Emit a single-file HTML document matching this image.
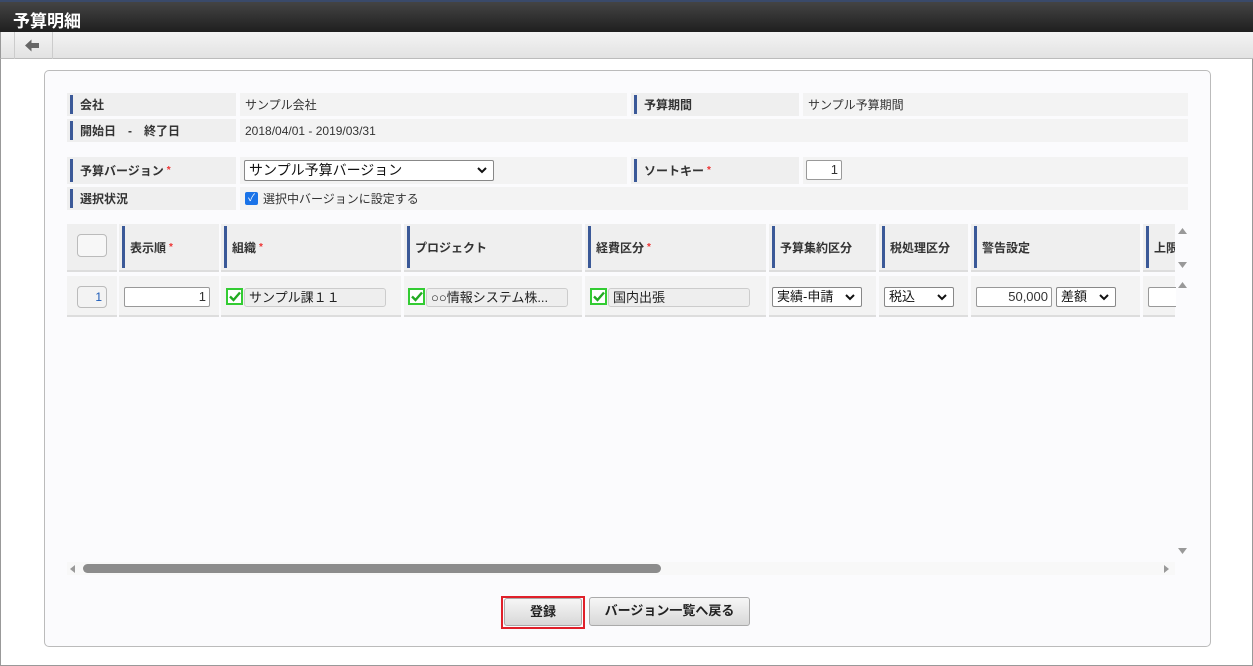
<!DOCTYPE html>
<html><head><meta charset="utf-8"><style>
*{box-sizing:border-box;margin:0;padding:0}
body{width:1253px;height:666px;background:#fff;font-family:"Liberation Sans","Noto Sans CJK JP",sans-serif;font-size:12px;color:#333;position:relative;overflow:hidden}
.a{position:absolute}
.lab{background:#efefef;font-weight:bold;padding-left:13px;display:flex;align-items:center}
.lab:before{content:"";position:absolute;left:3px;top:2px;bottom:2px;width:3px;background:#3b5998}
.val{background:#f3f3f3;padding-left:5px;display:flex;align-items:center}
.req{color:#e33;font-size:10px;margin-left:3px}
.th{background:#efefef;font-weight:bold;display:flex;align-items:center;padding-left:11px;border-bottom:2px solid #ddd}
.th.b:before{content:"";position:absolute;left:3px;top:2px;bottom:2px;width:3px;background:#3b5998}
.td{background:#f3f3f3;border-bottom:2px solid #ddd}
.inp{position:absolute;background:#fff;border:1px solid #999;border-radius:2px;font-size:13px;text-align:right;padding-right:3px;line-height:18px;height:20px}
.sel{position:absolute;background:#fff;border:1px solid #888;border-radius:2px;font-size:13px;padding-left:4px;line-height:18px;height:20px;color:#111}
.sel svg{position:absolute;right:6px;top:6px}
.ro{position:absolute;background:#eee;border:1px solid #ccc;border-radius:3px;font-size:13px;padding-left:4px;line-height:17px;height:19px;color:#222}
.ck{position:absolute;width:17px;height:17px;border:2px solid #3c3;background:#fff}
.ck svg{position:absolute;left:1px;top:1px}
.btn{position:absolute;background:linear-gradient(#f6f6f6,#d8d8d8);border:1px solid #aaa;border-radius:3px;font-size:13px;font-weight:bold;text-align:center;line-height:26px;color:#222}
</style></head><body>
<div class="a" style="left:0;top:0;width:1253px;height:666px;border:1px solid #999;border-top:none"></div>
<div class="a" style="left:0;top:0;width:1253px;height:32px;background:linear-gradient(#444,#1f1f1f);border-top:2px solid #3a4a6a;color:#fff;font-size:17px;font-weight:bold;padding:5px 0 0 13px">予算明細</div>
<div class="a" style="left:0;top:32px;width:1253px;height:27px;background:linear-gradient(#f4f4f4,#e2e2e2);border-bottom:1px solid #bbb;border-left:1px solid #999"></div>
<div class="a" style="left:14px;top:32px;width:39px;height:27px;border-left:1px solid #ccc;border-right:1px solid #ccc"></div>
<svg class="a" style="left:25px;top:39px" width="15" height="13" viewBox="0 0 15 13"><path d="M0 6.5L6.5 0.5V4H14V9H6.5V12.5Z" fill="#666"/></svg>
<div class="a" style="left:44px;top:70px;width:1167px;height:577px;border:1px solid #bbb;border-radius:5px;background:#fbfbfd"></div>

<div class="a lab" style="left:67px;top:93px;width:169px;height:23px">会社</div>
<div class="a val" style="left:240px;top:93px;width:387px;height:23px">サンプル会社</div>
<div class="a lab" style="left:631px;top:93px;width:168px;height:23px">予算期間</div>
<div class="a val" style="left:803px;top:93px;width:385px;height:23px">サンプル予算期間</div>
<div class="a lab" style="left:67px;top:119px;width:169px;height:23px">開始日　-　終了日</div>
<div class="a val" style="left:240px;top:119px;width:948px;height:23px">2018/04/01 - 2019/03/31</div>

<div class="a lab" style="left:67px;top:157px;width:169px;height:27px">予算バージョン<span class="req">*</span></div>
<div class="a val" style="left:240px;top:157px;width:387px;height:27px"></div>
<div class="sel" style="left:244px;top:160px;width:250px;height:21px;font-size:14px">サンプル予算バージョン<svg width="10" height="7"><path d="M1 1L5 5L9 1" stroke="#111" stroke-width="2" fill="none"/></svg></div>
<div class="a lab" style="left:631px;top:157px;width:168px;height:27px">ソートキー<span class="req">*</span></div>
<div class="a val" style="left:803px;top:157px;width:385px;height:27px"></div>
<div class="inp" style="left:806px;top:160px;width:36px">1</div>
<div class="a lab" style="left:67px;top:187px;width:169px;height:23px">選択状況</div>
<div class="a val" style="left:240px;top:187px;width:948px;height:23px"><span style="display:inline-block;width:13px;height:13px;background:#1a73e8;border-radius:2px;color:#fff;font-size:10px;text-align:center;line-height:13px;margin-right:5px">✓</span>選択中バージョンに設定する</div>

<div class="a th" style="left:67px;top:224px;width:50px;height:48px;padding:0"></div>
<div class="a" style="left:77px;top:234px;width:30px;height:23px;border:1px solid #bbb;border-radius:4px;background:#f7f7f7"></div>
<div class="a th b" style="left:119px;top:224px;width:100px;height:48px">表示順<span class="req">*</span></div>
<div class="a th b" style="left:221px;top:224px;width:180px;height:48px">組織<span class="req">*</span></div>
<div class="a th b" style="left:404px;top:224px;width:178px;height:48px">プロジェクト</div>
<div class="a th b" style="left:585px;top:224px;width:181px;height:48px">経費区分<span class="req">*</span></div>
<div class="a th b" style="left:769px;top:224px;width:107px;height:48px">予算集約区分</div>
<div class="a th b" style="left:879px;top:224px;width:89px;height:48px">税処理区分</div>
<div class="a th b" style="left:971px;top:224px;width:169px;height:48px">警告設定</div>
<div class="a th b" style="left:1143px;top:224px;width:32px;height:48px;overflow:hidden;white-space:nowrap">上限</div>

<div class="a td" style="left:67px;top:276px;width:50px;height:41px"></div>
<div class="a td" style="left:119px;top:276px;width:100px;height:41px"></div>
<div class="a td" style="left:221px;top:276px;width:180px;height:41px"></div>
<div class="a td" style="left:404px;top:276px;width:178px;height:41px"></div>
<div class="a td" style="left:585px;top:276px;width:181px;height:41px"></div>
<div class="a td" style="left:769px;top:276px;width:107px;height:41px"></div>
<div class="a td" style="left:879px;top:276px;width:89px;height:41px"></div>
<div class="a td" style="left:971px;top:276px;width:169px;height:41px"></div>
<div class="a td" style="left:1143px;top:276px;width:32px;height:41px"></div>
<div class="a" style="left:77px;top:286px;width:30px;height:22px;border:1px solid #bbb;border-radius:4px;text-align:right;padding-right:4px;line-height:20px;color:#1a5ab8">1</div>
<div class="inp" style="left:124px;top:287px;width:86px">1</div>
<div class="ck" style="left:226px;top:288px"><svg width="12" height="11"><path d="M1 5.5L4.5 9L11 1.5" stroke="#2a2" stroke-width="2.4" fill="none"/></svg></div>
<div class="ro" style="left:244px;top:288px;width:142px">サンプル課１１</div>
<div class="ck" style="left:408px;top:288px"><svg width="12" height="11"><path d="M1 5.5L4.5 9L11 1.5" stroke="#2a2" stroke-width="2.4" fill="none"/></svg></div>
<div class="ro" style="left:426px;top:288px;width:142px">○○情報システム株...</div>
<div class="ck" style="left:590px;top:288px"><svg width="12" height="11"><path d="M1 5.5L4.5 9L11 1.5" stroke="#2a2" stroke-width="2.4" fill="none"/></svg></div>
<div class="ro" style="left:608px;top:288px;width:142px">国内出張</div>
<div class="sel" style="left:772px;top:287px;width:90px">実績-申請<svg width="10" height="7"><path d="M1 1L5 5L9 1" stroke="#111" stroke-width="2" fill="none"/></svg></div>
<div class="sel" style="left:884px;top:287px;width:70px">税込<svg width="10" height="7"><path d="M1 1L5 5L9 1" stroke="#111" stroke-width="2" fill="none"/></svg></div>
<div class="inp" style="left:976px;top:287px;width:76px">50,000</div>
<div class="sel" style="left:1056px;top:287px;width:60px">差額<svg width="10" height="7"><path d="M1 1L5 5L9 1" stroke="#111" stroke-width="2" fill="none"/></svg></div>
<div class="inp" style="left:1148px;top:287px;width:30px;border-right:none"></div>

<div class="a" style="left:1176px;top:222px;width:14px;height:340px;background:#fbfbfd"></div>
<svg class="a" style="left:1178px;top:228px" width="9" height="6"><path d="M0 6L4.5 0L9 6Z" fill="#999"/></svg>
<svg class="a" style="left:1178px;top:262px" width="9" height="6"><path d="M0 0L4.5 6L9 0Z" fill="#999"/></svg>
<svg class="a" style="left:1178px;top:282px" width="9" height="6"><path d="M0 6L4.5 0L9 6Z" fill="#999"/></svg>
<svg class="a" style="left:1178px;top:548px" width="9" height="6"><path d="M0 0L4.5 6L9 0Z" fill="#999"/></svg>
<div class="a" style="left:67px;top:562px;width:1108px;height:13px;background:#f8f8f8"></div>
<svg class="a" style="left:70px;top:565px" width="5" height="8"><path d="M5 0L0 4L5 8Z" fill="#999"/></svg>
<svg class="a" style="left:1164px;top:565px" width="5" height="8"><path d="M0 0L5 4L0 8Z" fill="#999"/></svg>
<div class="a" style="left:83px;top:564px;width:578px;height:9px;background:#8c8c8c;border-radius:5px"></div>

<div class="a" style="left:501px;top:596px;width:84px;height:33px;border:2px solid #e0202a"></div>
<div class="btn" style="left:504px;top:598px;width:78px;height:28px">登録</div>
<div class="btn" style="left:589px;top:597px;width:161px;height:29px">バージョン一覧へ戻る</div>
</body></html>
